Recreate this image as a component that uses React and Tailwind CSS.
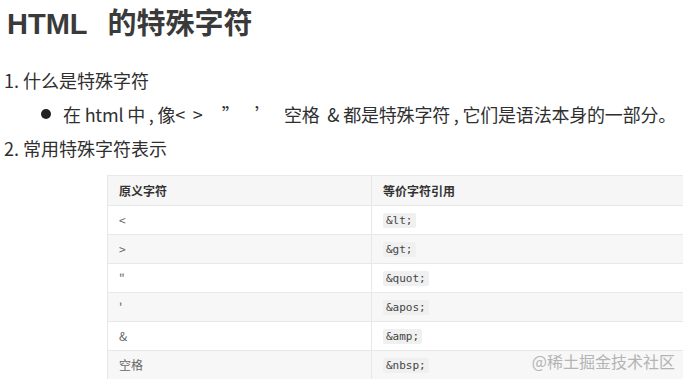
const rows = [
  ['<', '&lt;'],
  ['>', '&gt;'],
  ['"', '&quot;'],
  ["'", '&apos;'],
  ['&', '&amp;'],
  ['空格', '&nbsp;'],
]

export default function App() {
  return (
    <div className="relative w-[683px] h-[379px] overflow-hidden bg-white text-[#333] font-['Noto_Sans_CJK_SC',sans-serif]">
      <h1 className="pl-[7px] pt-[5px] h-[63px] text-[29px] font-bold leading-[38px] text-[#3a3a3a] font-['Liberation_Sans','Noto_Sans_CJK_SC',sans-serif]">
        <span>HTML</span>
        <span className="ml-[20px]">的特殊字符</span>
      </h1>

      <div className="text-[18px] leading-[34px] text-[#2f2f2f]">
        <p className="pl-[4px]">1. 什么是特殊字符</p>
        <p className="pl-[41px] flex items-center whitespace-nowrap">
          <span className="shrink-0 w-[10px] h-[10px] rounded-full bg-[#222] mr-[12px]" />
          <span className="tracking-[-0.2px]">在 html 中 , 像&lt;&nbsp;&nbsp;&gt;&nbsp;&nbsp;&nbsp;&nbsp;&nbsp;”&nbsp;&nbsp;&nbsp;&nbsp;’&nbsp;&nbsp;&nbsp;空格&nbsp;&nbsp;&amp; 都是特殊字符 , 它们是语法本身的一部分。</span>
        </p>
        <p className="pl-[4px]">2. 常用特殊字符表示</p>
      </div>

      <table className="absolute left-[107px] top-[175px] w-[620px] border-collapse text-[12px]">
        <thead>
          <tr className="h-[30px] bg-[#f6f6f6]">
            <th className="w-[264px] pl-[11px] text-left font-bold text-[#333] border border-[#e8e8e8]">原义字符</th>
            <th className="pl-[11px] text-left font-bold text-[#333] border border-[#e8e8e8]">等价字符引用</th>
          </tr>
        </thead>
        <tbody>
          {rows.map(([raw, ref], i) => (
            <tr key={ref} className={`h-[29px] ${i % 2 ? 'bg-[#f7f7f7]' : 'bg-white'}`}>
              <td className="pl-[11px] text-[#666] border border-[#e8e8e8]">{raw}</td>
              <td className="pl-[11px] border border-[#e8e8e8]">
                <code className="px-[3px] py-[1px] rounded-[2px] bg-[#f0f0f0] text-[11px] text-[#444] font-['DejaVu_Sans_Mono',monospace]">
                  {ref}
                </code>
              </td>
            </tr>
          ))}
        </tbody>
      </table>

      <span className="absolute right-[8px] bottom-[6px] text-[16px] text-[#b4b4b4] font-['Noto_Sans_CJK_SC',serif]">
        @稀土掘金技术社区
      </span>
    </div>
  )
}
